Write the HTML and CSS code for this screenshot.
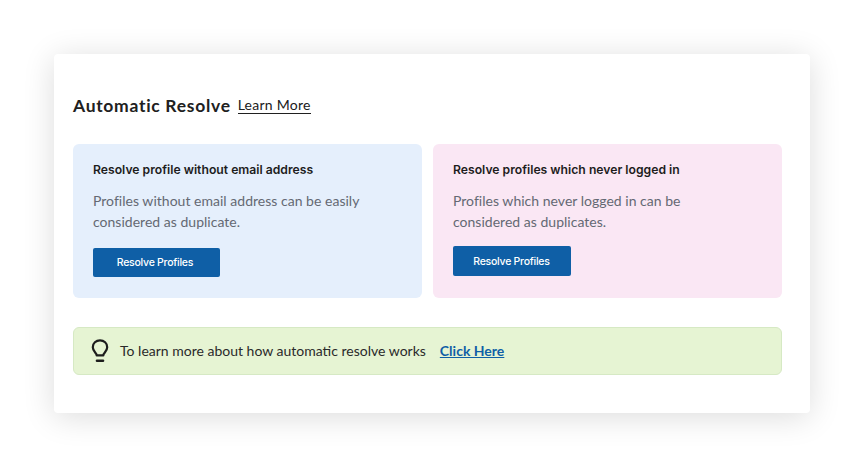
FILE: index.html
```html
<!DOCTYPE html>
<html lang="en">
<head>
  <meta charset="UTF-8" />
  <meta name="viewport" content="width=device-width, initial-scale=1.0"/>
  <title>Automatic Resolve</title>
  <link rel="stylesheet" href="styles.css">
</head>
<body>
  <main class="panel">
    <header class="panel-head">
      <h1>Automatic Resolve</h1>
      <a href="#" class="learn-link">Learn More</a>
    </header>

    <div class="cards">
      <section class="card card-blue">
        <h2>Resolve profile without email address</h2>
        <p>Profiles without email address can be easily considered as duplicate.</p>
        <button class="btn btn-wide">Resolve Profiles</button>
      </section>

      <section class="card card-pink">
        <h2>Resolve profiles which never logged in</h2>
        <p>Profiles which never logged in can be considered as duplicates.</p>
        <button class="btn btn-tall">Resolve Profiles</button>
      </section>
    </div>

    <!-- Help banner -->
    <div class="tip">
      <svg class="tip-icon" width="18" height="24" viewBox="0 0 18 24" fill="none" stroke="#1d1d1d" stroke-width="2.200" stroke-linecap="round">
        <path d="M5.700 16.400c0-2.400-3.900-4-3.900-8.200C1.800 4.200 5 1.400 9 1.400s7.200 2.800 7.200 6.800c0 4.200-3.900 5.800-3.900 8.200z" stroke-linejoin="round"/>
        <path d="M6 21.700h6" stroke-width="2.600"/>
      </svg>
      <span>To learn more about how automatic resolve works</span>
      <a href="#" class="tip-link">Click Here</a>
    </div>
  </main>
</body>
</html>
```

FILE: styles.css
```css
body {
  margin: 0;
  padding: 54px;
  background: #fff;
  font-family: 'Lato', 'Open Sans', sans-serif;
  color: #1d1d1d;
}

.panel {
  width: 756px;
  height: 359px;
  box-sizing: border-box;
  padding: 40px 28px 0 19px;
  background: #fff;
  border-radius: 4px;
  box-shadow: 0 4px 32px rgba(0, 0, 0, 0.14);
}

.panel-head {
  display: flex;
  align-items: center;
  gap: 7px;
  height: 22px;
  margin-bottom: 28px;
}

.panel-head h1 {
  margin: 0;
  font-size: 17.500px;
  font-weight: 700;
  letter-spacing: 0.7px;
  color: #202020;
}

.learn-link {
  font-size: 14px;
  letter-spacing: 0.25px;
  color: #202020;
  text-decoration: none;
  border-bottom: 1px solid #202020;
  line-height: 16px;
}

.cards {
  display: grid;
  grid-template-columns: 349px 349px;
  gap: 11px;
  margin-bottom: 29px;
}

.card {
  height: 154px;
  box-sizing: border-box;
  padding: 17px 20px 0;
  border-radius: 6px;
}

.card-blue {
  background: #e5effc;
}

.card-pink {
  background: #fae7f4;
}

.card h2 {
  margin: 0 0 11px;
  font-family: 'Inter', sans-serif;
  font-size: 12.200px;
  line-height: 18px;
  font-weight: 600;
  color: #1d1d1d;
}

.card p {
  margin: 0 0 16px;
  max-width: 290px;
  font-size: 14px;
  letter-spacing: 0.02px;
  line-height: 21px;
  color: #646973;
}

.btn {
  display: block;
  border: none;
  border-radius: 2px;
  background: #0f5fa6;
  color: white;
  font-family: 'Inter', sans-serif;
  font-size: 10.500px;
  font-weight: 500;
  letter-spacing: -0.25px;
  cursor: pointer;
}

.btn-wide {
  width: 127px;
  height: 29px;
  padding: 0 3px 0 0;
}

.btn-tall {
  width: 118px;
  height: 30px;
  margin-top: -2px;
  padding: 0 1px 0 0;
}

.tip {
  display: flex;
  align-items: center;
  height: 48px;
  box-sizing: border-box;
  padding: 0 0 1px 17px;
  background: #e6f4d3;
  border: 1px solid #d6e9c4;
  border-radius: 6px;
  font-size: 14px;
  color: #2a2a2a;
}

.tip-icon {
  margin: 1px 11px 0 0;
}

.tip-link {
  margin-left: 14px;
  font-weight: 700;
  color: #0f5fa6;
}
```
